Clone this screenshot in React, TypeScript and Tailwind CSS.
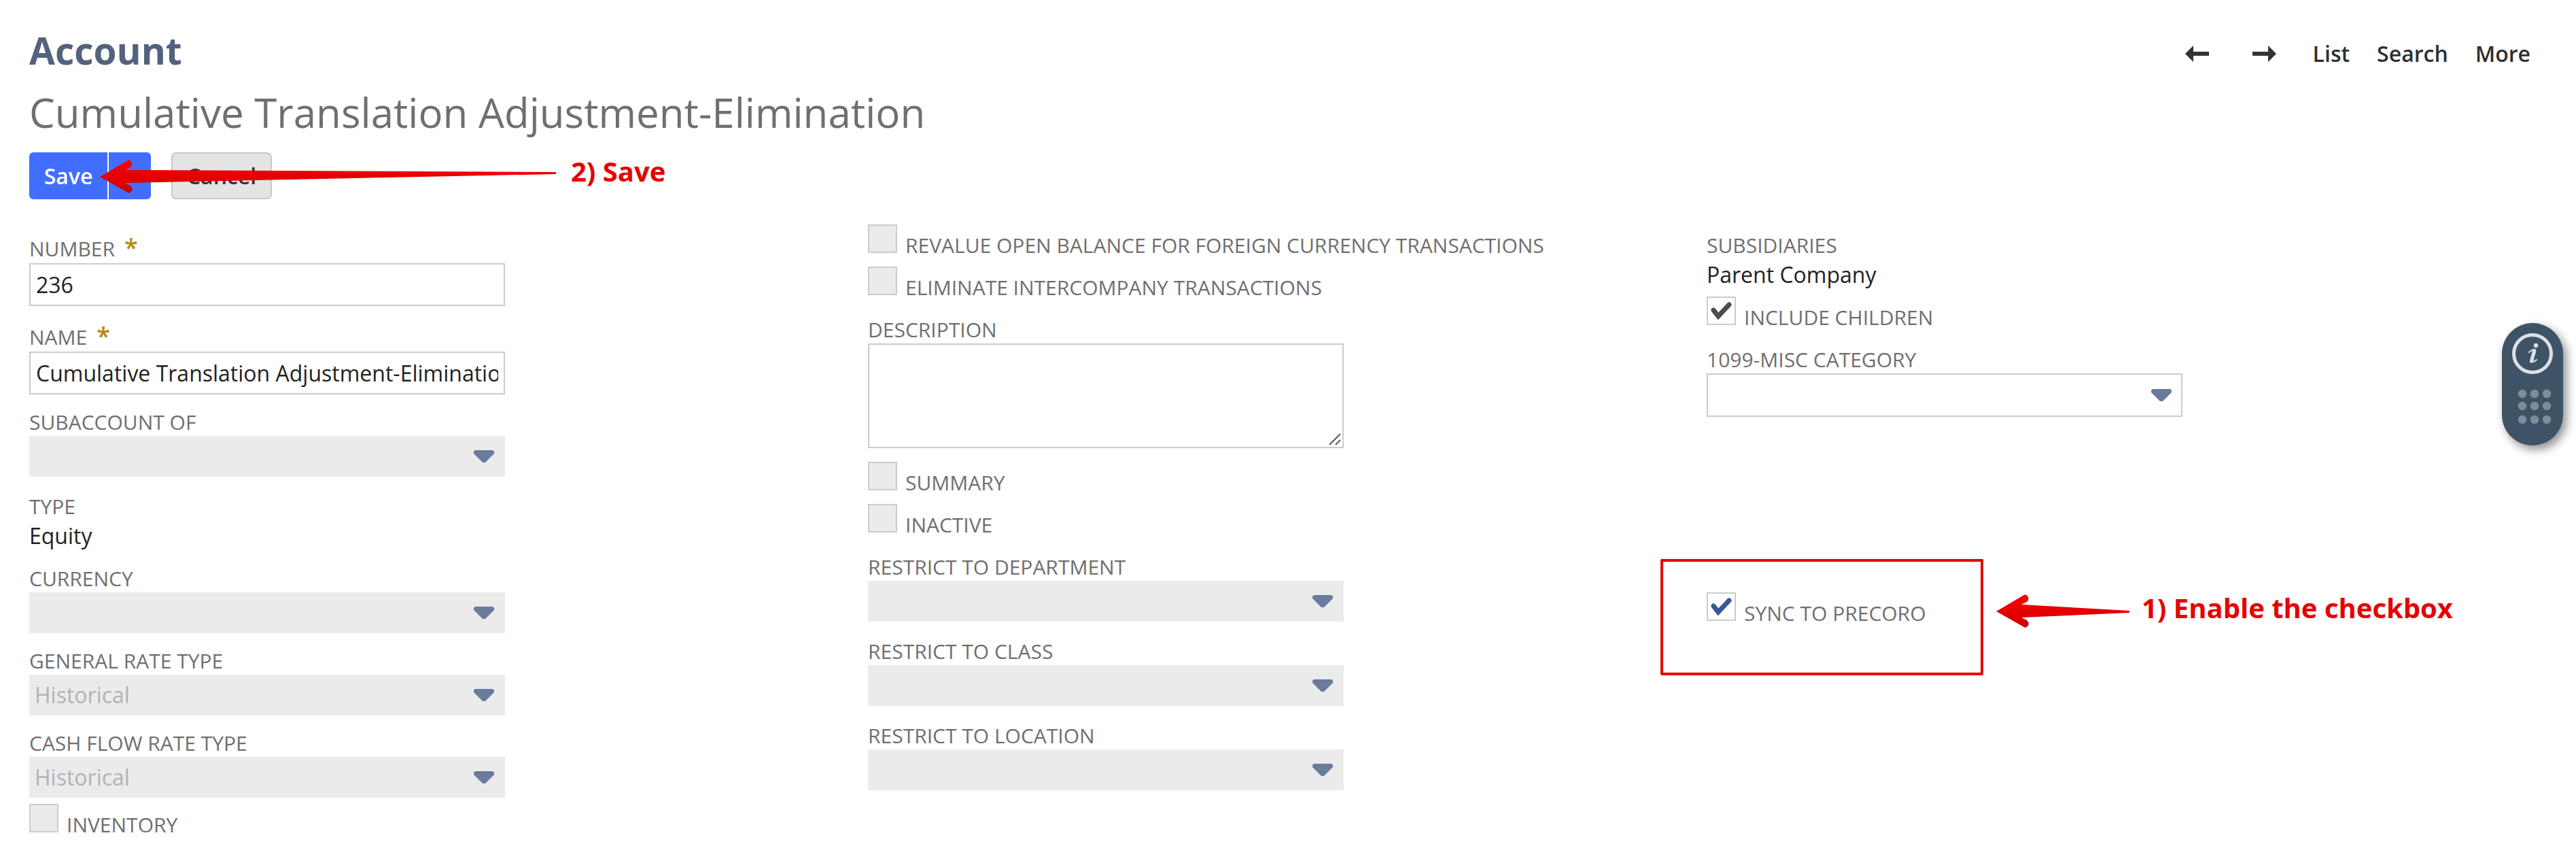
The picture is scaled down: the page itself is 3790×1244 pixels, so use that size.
import { useState } from 'react';
import type { ReactNode } from 'react';

const BOX = 'block w-[700px] max-w-full border-2 border-[#ccc] bg-white text-[32px] text-[#222] outline-none';

function Label({ htmlFor, required, children }: { htmlFor: string; required?: boolean; children: ReactNode }) {
  return (
    <label
      htmlFor={htmlFor}
      className={`flex gap-[14px] text-[30px] leading-[44px] text-[#6f6f6f] whitespace-nowrap ${required ? 'h-[43px]' : 'h-[42px]'}`}
    >
      {children}
      {required && <span className="text-[36px] leading-[40px] font-semibold text-[#b8860b]">*</span>}
    </label>
  );
}

interface TextFieldProps {
  id: string;
  label: string;
  defaultValue: string;
}

function TextField({ id, label, defaultValue }: TextFieldProps) {
  return (
    <div>
      <Label htmlFor={id} required>{label}</Label>
      <input id={id} type="text" defaultValue={defaultValue} className={`${BOX} h-[63px] px-2`} />
    </div>
  );
}

interface SelectFieldProps {
  id: string;
  label: string;
  value?: string;
  disabled?: boolean;
}

function SelectField({ id, label, value = '', disabled = true }: SelectFieldProps) {
  return (
    <div>
      <Label htmlFor={id}>{label}</Label>
      <div className="relative w-[700px] max-w-full">
        <select
          id={id}
          disabled={disabled}
          defaultValue={value}
          className={
            disabled
              ? 'block w-full h-[60px] px-2 appearance-none bg-[#ebebeb] text-[32px] text-[#b3b3b3] opacity-100'
              : `${BOX} h-16 px-2 appearance-none`
          }
        >
          <option value={value}>{value}</option>
        </select>
        <svg viewBox="0 0 30 18" className="absolute right-4 top-1/2 -mt-[9px] w-[30px] h-[18px] pointer-events-none" aria-hidden="true">
          <path d="M2 0H28L30 2V5L17 18H13L0 5V2Z" fill="#6a7b9c" />
        </svg>
      </div>
    </div>
  );
}

function ValueField({ label, value }: { label: string; value: string }) {
  return (
    <dl>
      <dt className="h-[42px] text-[30px] leading-[44px] text-[#6f6f6f]">{label}</dt>
      <dd className="text-[32px] leading-[45px] text-[#222]">{value}</dd>
    </dl>
  );
}

interface CheckFieldProps {
  id: string;
  label: string;
  tone?: 'disabled' | 'dark' | 'blue';
}

function CheckField({ id, label, tone = 'disabled' }: CheckFieldProps) {
  const [checked, setChecked] = useState(tone !== 'disabled');

  return (
    <div className="flex items-end gap-3 h-[51px]">
      <div className="relative self-start w-[43px] h-[42px]">
        <input
          id={id}
          type="checkbox"
          disabled={tone === 'disabled'}
          checked={checked}
          onChange={(e) => setChecked(e.target.checked)}
          className="block w-[43px] h-[42px] appearance-none border-2 border-[#ccc] bg-white disabled:bg-[#ebebeb]"
        />
        {checked && (
          <svg viewBox="0 0 43 42" className="absolute inset-0 w-full h-full pointer-events-none" aria-hidden="true">
            <path
              d="M10 20L17 29L33 12"
              fill="none"
              stroke={tone === 'blue' ? '#3a5795' : '#4d4d4d'}
              strokeWidth="7"
              strokeLinecap="round"
            />
          </svg>
        )}
      </div>
      <label htmlFor={id} className="h-[42px] text-[30px] leading-[44px] text-[#6f6f6f] whitespace-nowrap">
        {label}
      </label>
    </div>
  );
}

function RedGradient({ id }: { id: string }) {
  return (
    <defs>
      <linearGradient id={id} x1="0" y1="0" x2="0" y2="1">
        <stop offset="0" stopColor="#ff0000" />
        <stop offset="1" stopColor="#cc0000" />
      </linearGradient>
    </defs>
  );
}

function Header() {
  return (
    <header className="flex justify-between items-start">
      <div>
        <h1 className="text-[55px] leading-[76px] font-bold text-[#54627f]">Account</h1>
        <h2 className="mt-3 text-[60px] leading-[82px] text-[#6f6f6f]">Cumulative Translation Adjustment-Elimination</h2>
      </div>
      <nav className="flex items-center mt-5 mr-[22px] gap-10 text-[32px] leading-[45px] font-semibold text-[#2f2f2f]">
        <div className="flex gap-16 mr-[14px]">
          <button aria-label="Previous">
            <svg viewBox="0 0 35 24" className="w-[35px] h-6">
              <path d="M0 12L12 0V9H35V15H12V24Z" fill="#333" />
            </svg>
          </button>
          <button aria-label="Next">
            <svg viewBox="0 0 35 24" className="w-[35px] h-6">
              <path d="M35 12L23 0V9H0V15H23V24Z" fill="#333" />
            </svg>
          </button>
        </div>
        <a href="#list">List</a>
        <a href="#search">Search</a>
        <a href="#more">More</a>
      </nav>
    </header>
  );
}

function Toolbar() {
  return (
    <div className="relative flex mt-[18px] gap-[30px] text-[32px] font-semibold">
      <div className="flex gap-[2px] h-[69px]">
        <button className="w-[115px] rounded-l-[6px] bg-[#416eff] text-white">Save</button>
        <button aria-label="More save options" className="w-[62px] rounded-r-[6px] bg-[#416eff]" />
      </div>
      <button className="w-[148px] h-[69px] rounded-[7px] border-2 border-[#c8c8c8] bg-[#e4e4e4] text-[#333]">Cancel</button>

      <div className="absolute left-[104px] top-[11px] flex gap-[21px] pointer-events-none">
        <svg viewBox="0 0 672 50" className="w-[672px] h-[50px]" aria-hidden="true">
          <RedGradient id="save-arrow" />
          <path d="M0 25L39 2Q44 -2 47 4Q48 9 45 11L37 15L671 18V21L37 34L45 38Q49 42 47 46Q43 51 39 47Z" fill="url(#save-arrow)" />
        </svg>
        <span className="text-[40px] leading-[34px] font-bold text-[#e60000] whitespace-nowrap">2) Save</span>
      </div>
    </div>
  );
}

function SyncField() {
  return (
    <div className="relative mt-[258px]">
      <CheckField id="sync" label="SYNC TO PRECORO" tone="blue" />
      <div className="absolute -left-[68px] -top-[49px] flex gap-[19px] pointer-events-none">
        <div className="w-[475px] h-[171px] border-4 border-[#e60000] rounded-[2px]" />
        <div className="flex gap-[18px] pt-[52px]">
          <svg viewBox="0 0 196 50" className="w-[196px] h-[50px]" aria-hidden="true">
            <RedGradient id="sync-arrow" />
            <path d="M0 25L39 2Q44 -2 47 4Q48 9 45 11L37 15L196 24V27L37 34L45 38Q49 42 47 46Q43 51 39 47Z" fill="url(#sync-arrow)" />
          </svg>
          <span className="text-[40px] leading-[40px] font-bold text-[#e60000] whitespace-nowrap">1) Enable the checkbox</span>
        </div>
      </div>
    </div>
  );
}

function HelpWidget() {
  return (
    <aside className="fixed right-[19px] top-[475px] w-[90px] h-[180px] rounded-[45px] bg-[#3e5366] shadow-[5px_6px_14px_rgba(0,0,0,0.45)]">
      <button aria-label="Information" className="block w-full h-full">
        <svg viewBox="0 0 90 180" className="w-full h-full">
          <circle cx="45" cy="45" r="27.500" fill="none" stroke="#dce0e4" strokeWidth="5" />
          <circle cx="50" cy="33" r="3.200" fill="#dce0e4" />
          <path
            d="M40 43Q44 39 48 39Q50 40 49 43L45 54Q44 57 46 57Q48 57 51 54"
            fill="none"
            stroke="#dce0e4"
            strokeWidth="2"
            strokeLinecap="round"
          />
          <path d="M47.500 41L43.500 56" stroke="#dce0e4" strokeWidth="5" strokeLinecap="round" />
          {[104, 122, 142].map((cy) =>
            [30, 48, 66].map((cx) => <circle key={`${cx}-${cy}`} cx={cx} cy={cy} r="6.200" fill="#7f8d9a" />)
          )}
        </svg>
      </button>
    </aside>
  );
}

export default function App() {
  return (
    <main className="pl-[43px] pr-[45px] pt-9 pb-5 bg-white font-['Open_Sans','Noto_Sans',sans-serif]">
      <Header />
      <Toolbar />

      <form className="grid grid-cols-3 mt-[37px]" onSubmit={(e) => e.preventDefault()}>
        <div className="flex flex-col gap-[19px] pt-[14px]">
          <div className="flex flex-col gap-6">
            <TextField id="number" label="NUMBER" defaultValue="236" />
            <TextField id="name" label="NAME" defaultValue="Cumulative Translation Adjustment-Elimination" />
          </div>
          <div className="flex flex-col gap-[22px]">
            <SelectField id="subaccount" label="SUBACCOUNT OF" />
            <ValueField label="TYPE" value="Equity" />
          </div>
          <SelectField id="currency" label="CURRENCY" />
          <SelectField id="general-rate" label="GENERAL RATE TYPE" value="Historical" />
          <div className="flex flex-col gap-[9px]">
            <SelectField id="cash-rate" label="CASH FLOW RATE TYPE" value="Historical" />
            <CheckField id="inventory" label="INVENTORY" />
          </div>
        </div>

        <div className="flex flex-col gap-5">
          <div className="flex flex-col gap-[11px]">
            <CheckField id="revalue" label="REVALUE OPEN BALANCE FOR FOREIGN CURRENCY TRANSACTIONS" />
            <CheckField id="eliminate" label="ELIMINATE INTERCOMPANY TRANSACTIONS" />
          </div>
          <div>
            <Label htmlFor="description">DESCRIPTION</Label>
            <div className="relative w-[700px] max-w-full">
              <textarea id="description" className={`${BOX} h-[154px] px-2 resize-none`} />
              <svg viewBox="0 0 18 18" className="absolute right-1 bottom-1 w-[18px] h-[18px] pointer-events-none" aria-hidden="true">
                <path d="M1 17L17 1M10 17L17 10" stroke="#555" strokeWidth="2" />
              </svg>
            </div>
          </div>
          <div className="flex flex-col gap-[11px]">
            <CheckField id="summary" label="SUMMARY" />
            <CheckField id="inactive" label="INACTIVE" />
          </div>
          <div className="flex flex-col gap-[22px]">
            <SelectField id="department" label="RESTRICT TO DEPARTMENT" />
            <SelectField id="class" label="RESTRICT TO CLASS" />
            <SelectField id="location" label="RESTRICT TO LOCATION" />
          </div>
        </div>

        <div className="pt-[9px]">
          <div className="flex flex-col gap-5">
            <div className="flex flex-col gap-[10px]">
              <ValueField label="SUBSIDIARIES" value="Parent Company" />
              <CheckField id="children" label="INCLUDE CHILDREN" tone="dark" />
            </div>
            <SelectField id="misc" label="1099-MISC CATEGORY" disabled={false} />
          </div>
          <SyncField />
        </div>
      </form>

      <HelpWidget />
    </main>
  );
}
